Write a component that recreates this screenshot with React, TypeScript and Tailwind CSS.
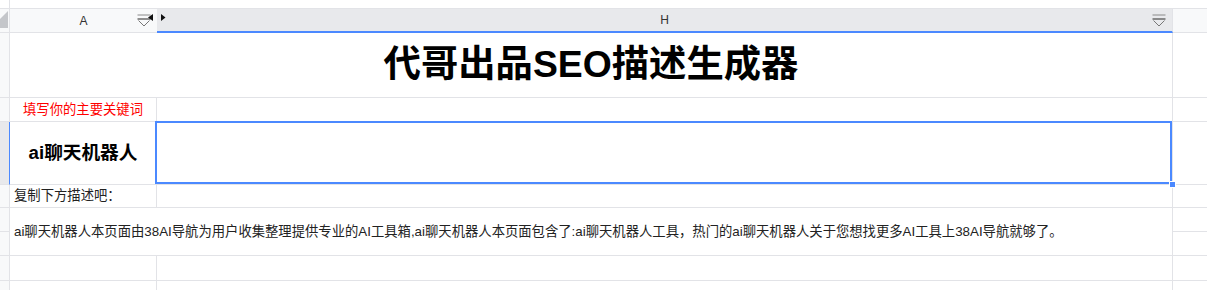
import React from "react";

const FONT = { fontFamily: '"Liberation Sans", "Noto Sans CJK SC", sans-serif' };

function FilterIcon() {
  return (
    <svg width="14" height="13" viewBox="0 0 14 13" className="block">
      <line x1="0.5" y1="1" x2="13.5" y2="1" stroke="#8a8a8a" strokeWidth="1" />
      <line x1="0.5" y1="5" x2="13.5" y2="5" stroke="#555" strokeWidth="1.3" />
      <path d="M1.5 6.5 L7 12 L12.5 6.5" fill="none" stroke="#777" strokeWidth="1" />
    </svg>
  );
}

export default function App() {
  return (
    <div className="w-[1207px] h-[290px] overflow-hidden bg-white text-[#222]" style={FONT}>
      {/* top strip */}
      <div className="flex h-[9px] border-b border-[#e2e3e7]">
        <div className="w-[10px] border-r border-[#e2e3e7]" />
      </div>
      <div className="grid grid-cols-[10px_147px_1016px_1fr] grid-rows-[24px_65px_24px_63px_23px_24px_24px_25px_24px]">
        {/* header row */}
        <div className="relative bg-[#f8f9fa] border-r border-b border-[#e2e3e7] overflow-hidden">
          <svg width="10" height="24" className="absolute left-0 top-0">
            <polygon points="8,2 8,19 -9,19" fill="#c4c6ca" />
          </svg>
        </div>
        <div className="relative flex items-center justify-center bg-[#f8f9fa] border-b border-[#e2e3e7] text-[12px] text-[#333]">
          A
          <div className="absolute left-[127px] top-[5px]">
            <FilterIcon />
          </div>
          <svg width="5" height="7" className="absolute left-[138px] top-[5px]">
            <polygon points="5,0 5,7 0,3.5" fill="#111" />
          </svg>
        </div>
        <div className="relative flex items-center justify-center bg-[#e8e9ec] border-r border-r-[#e2e3e7] border-b-2 border-b-[#4b89ff] text-[12px] text-[#333]">
          H
          <svg width="5" height="7" className="absolute left-[4px] top-[5px]">
            <polygon points="0,0 0,7 4.5,3.5" fill="#111" />
          </svg>
          <div className="absolute right-[6px] top-[5px]">
            <FilterIcon />
          </div>
        </div>
        <div className="bg-[#f8f9fa] border-b border-[#e2e3e7]" />

        {/* row 1 title */}
        <div className="bg-[#f8f9fa] border-r border-b border-[#e2e3e7]" />
        <div className="col-span-2 flex items-center justify-center border-r border-b border-[#e2e3e7] text-[37.33px] font-bold text-black">
          代哥出品SEO描述生成器
        </div>
        <div className="border-b border-[#e2e3e7]" />

        {/* row 2 */}
        <div className="bg-[#f8f9fa] border-r border-b border-[#e2e3e7]" />
        <div className="flex items-center justify-center border-r border-b border-[#e2e3e7] text-[13.33px] text-[#ff0000]">
          填写你的主要关键词
        </div>
        <div className="border-r border-b border-[#e2e3e7]" />
        <div className="border-b border-[#e2e3e7]" />

        {/* row 3 */}
        <div className="bg-[#e8e9ec] border-r border-r-[#4b89ff] border-b border-b-[#e2e3e7]" />
        <div className="flex items-center justify-center border-r border-b border-[#e2e3e7] text-[18.67px] font-bold text-black">
          ai聊天机器人
        </div>
        <div className="relative border-r border-b border-[#e2e3e7]">
          <div className="absolute -left-[2px] -top-[1px] right-0 bottom-0 border-2 border-[#4b89ff]" />
          <div className="absolute -right-[4px] -bottom-[4px] w-[7px] h-[7px] bg-[#4b89ff] border border-white" />
        </div>
        <div className="border-b border-[#e2e3e7]" />

        {/* row 4 */}
        <div className="bg-[#f8f9fa] border-r border-b border-[#e2e3e7]" />
        <div className="flex items-center pl-1 border-r border-b border-[#e2e3e7] text-[13.33px] whitespace-nowrap">
          复制下方描述吧：
        </div>
        <div className="border-r border-b border-[#e2e3e7]" />
        <div className="border-b border-[#e2e3e7]" />

        {/* rows 5-6 merged */}
        <div className="bg-[#f8f9fa] border-r border-b border-[#e2e3e7]" />
        <div className="col-span-2 row-span-2 flex items-center pl-1 border-r border-b border-[#e2e3e7] text-[13.33px] whitespace-nowrap">
          ai聊天机器人本页面由38AI导航为用户收集整理提供专业的AI工具箱,ai聊天机器人本页面包含了:ai聊天机器人工具，热门的ai聊天机器人关于您想找更多AI工具上38AI导航就够了。
        </div>
        <div className="border-b border-[#e2e3e7]" />
        <div className="bg-[#f8f9fa] border-r border-b border-[#e2e3e7]" />
        <div className="border-b border-[#e2e3e7]" />

        {/* row 7 */}
        <div className="bg-[#f8f9fa] border-r border-b border-[#e2e3e7]" />
        <div className="border-r border-b border-[#e2e3e7]" />
        <div className="border-r border-b border-[#e2e3e7]" />
        <div className="border-b border-[#e2e3e7]" />

        {/* row 8 */}
        <div className="bg-[#f8f9fa] border-r border-b border-[#e2e3e7]" />
        <div className="border-r border-b border-[#e2e3e7]" />
        <div className="border-r border-b border-[#e2e3e7]" />
        <div className="border-b border-[#e2e3e7]" />
      </div>
    </div>
  );
}
